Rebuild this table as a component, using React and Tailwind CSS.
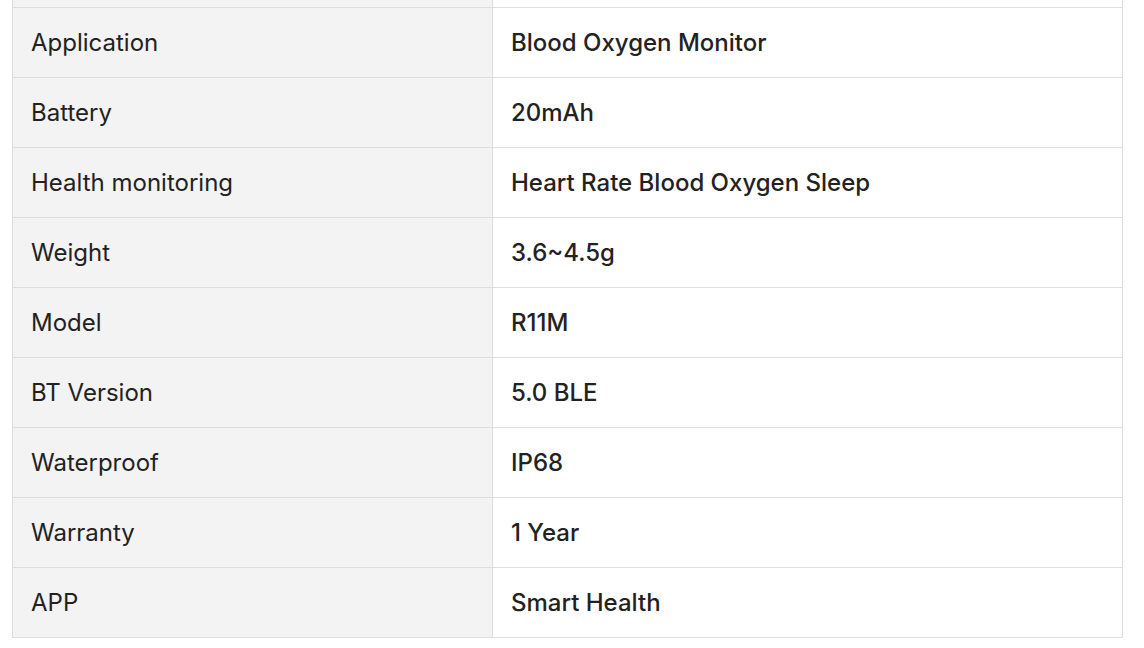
import React from 'react'

const rows = [
  ['', ''],
  ['Application', 'Blood Oxygen Monitor'],
  ['Battery', '20mAh'],
  ['Health monitoring', 'Heart Rate Blood Oxygen Sleep'],
  ['Weight', '3.6~4.5g'],
  ['Model', 'R11M'],
  ['BT Version', '5.0 BLE'],
  ['Waterproof', 'IP68'],
  ['Warranty', '1 Year'],
  ['APP', 'Smart Health'],
]

export default function App() {
  return (
    <div className="h-[648px] w-[1144px] overflow-hidden bg-white pl-3 pr-[21px] font-['Inter',sans-serif] text-[#222]">
      <table className="-mt-[63px] w-full border-collapse text-[24px]">
        <tbody>
          {rows.map(([label, value], i) => (
            <tr key={i} className="h-[70px]">
              <td className="w-[480px] border border-[#dddddd] bg-[#f3f3f3] px-[18px]">{label}</td>
              <td className="border border-[#dddddd] bg-white px-[18px] font-medium">{value}</td>
            </tr>
          ))}
        </tbody>
      </table>
    </div>
  )
}
